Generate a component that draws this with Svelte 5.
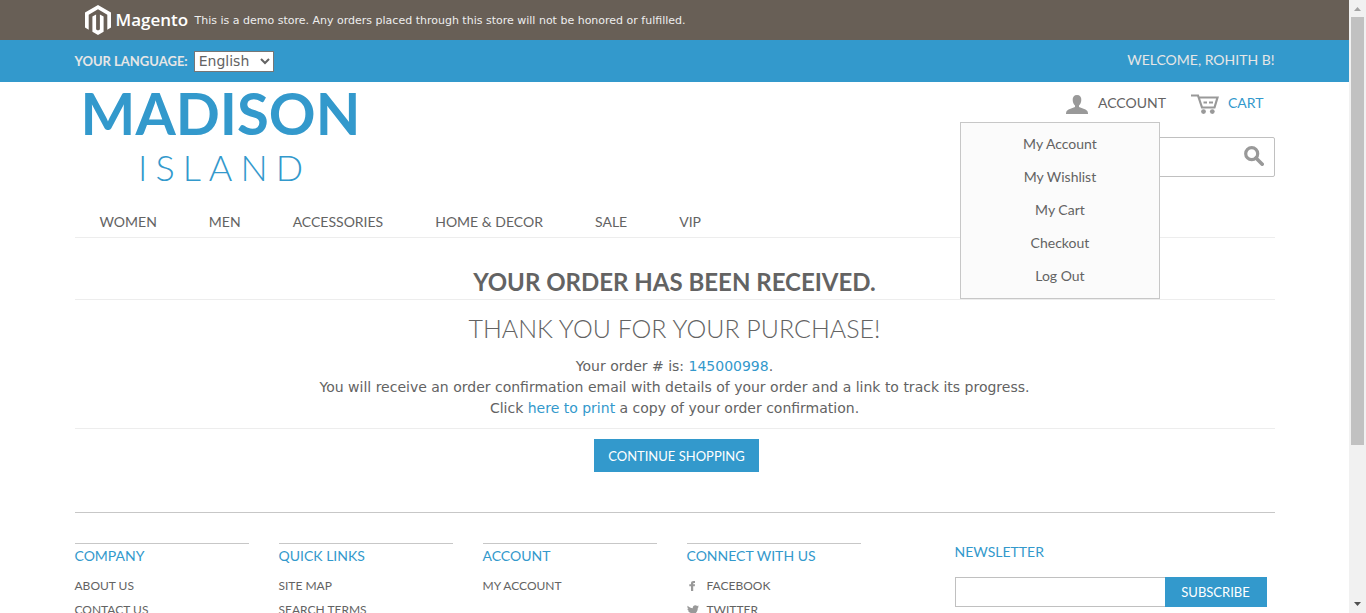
<script>
  const nav = ['Women', 'Men', 'Accessories', 'Home & Decor', 'Sale', 'VIP'];
  const accountMenu = ['My Account', 'My Wishlist', 'My Cart', 'Checkout', 'Log Out'];
  const columns = [
    { title: 'Company', links: ['About Us', 'Contact Us'] },
    { title: 'Quick Links', links: ['Site Map', 'Search Terms'] },
    { title: 'Account', links: ['My Account'] }
  ];
  let language = $state('English');
  let query = $state('');
  let email = $state('');
</script>

<div class="window">
  <div class="page">
    <div class="demo">
      <div class="wrap demo-row">
        <span class="brand">
          <svg width="26" height="30" viewBox="0 0 26 30" aria-hidden="true">
            <path fill="#fff" d="M13 0 26 7.500V22.500L22.300 24.700V9.700L13 4.300 3.700 9.700V24.700L0 22.500V7.500Z" />
            <path fill="#fff" d="M7.400 11.600 11.100 9.500V24.500L13 25.600 14.900 24.500V9.500L18.600 11.600V26.800L13 30 7.400 26.800Z" />
          </svg>
          <b>Magento</b>
        </span>
        <p>This is a demo store. Any orders placed through this store will not be honored or fulfilled.</p>
      </div>
    </div>

    <div class="lang">
      <div class="wrap lang-row">
        <label for="language">Your Language:</label>
        <select id="language" bind:value={language}>
          <option>English</option>
          <option>French</option>
          <option>German</option>
        </select>
        <p>Welcome, Rohith B!</p>
      </div>
    </div>

    <div class="wrap">
      <header>
        <a class="logo" href="#home"><strong>MADISON</strong><span>ISLAND</span></a>
        <div class="tools">
          <div class="actions">
            <div class="account">
              <a href="#account">
                <svg width="22" height="19" viewBox="0 0 22 19" aria-hidden="true">
                  <path fill="#999" d="M11 0C8 0 6.500 2 6.700 5C6.800 7.400 7.700 9.300 9 10.400V12L2.500 14.400Q0 15.400 0 18V19H22V18Q22 15.400 19.500 14.400L13 12V10.400C14.300 9.300 15.200 7.400 15.300 5C15.500 2 14 0 11 0Z" />
                </svg>
                <span>Account</span>
              </a>
              <ul class="menu">
                {#each accountMenu as item}
                  <li><a href="#account">{item}</a></li>
                {/each}
              </ul>
            </div>
            <a class="cart" href="#cart">
              <svg width="28" height="20" viewBox="0 0 28 20" aria-hidden="true">
                <path d="M0 1.500H7L11 13.500H23.500L26.500 3.500H8" fill="none" stroke="#999" stroke-width="2.200" />
                <path d="M12.500 8.500H16M18 8.500H22" stroke="#999" stroke-width="2" />
                <circle cx="12.500" cy="17.600" r="2.400" fill="#999" />
                <circle cx="21.300" cy="17.600" r="2.400" fill="#999" />
              </svg>
              <span>Cart</span>
            </a>
          </div>
          <form class="search" onsubmit={(e) => e.preventDefault()}>
            <input type="search" aria-label="Search" bind:value={query} />
            <button aria-label="Search">
              <svg width="20" height="20" viewBox="0 0 20 20" aria-hidden="true">
                <circle cx="7.700" cy="7.700" r="6" fill="none" stroke="#999" stroke-width="3.200" />
                <path d="M12 12 18.200 18.200" stroke="#999" stroke-width="3.600" stroke-linecap="round" />
              </svg>
            </button>
          </form>
        </div>
      </header>

      <nav>
        {#each nav as item}
          <a href="#shop">{item}</a>
        {/each}
      </nav>

      <main>
        <h1>Your order has been received.</h1>
        <h2>Thank you for your purchase!</h2>
        <p>Your order # is: <a href="#order">145000998</a>.</p>
        <p>You will receive an order confirmation email with details of your order and a link to track its progress.</p>
        <p>Click <a href="#print">here to print</a> a copy of your order confirmation.</p>
        <div class="buttons"><button class="primary">Continue Shopping</button></div>
      </main>

      <footer>
        {#each columns as column}
          <section>
            <h3>{column.title}</h3>
            <ul>
              {#each column.links as link}
                <li><a href="#info">{link}</a></li>
              {/each}
            </ul>
          </section>
        {/each}
        <section>
          <h3>Connect With Us</h3>
          <ul>
            <li>
              <a class="social" href="#facebook">
                <svg width="12" height="12" viewBox="0 0 12 12" aria-hidden="true">
                  <path fill="#999" d="M4 11V6.300H2.300V4.300H4V3.400C4 1.800 5 1 6.500 1H8V2.900H7C6.400 2.900 6.200 3.200 6.200 3.600V4.300H8L7.800 6.300H6.200V11Z" />
                </svg>
                Facebook
              </a>
            </li>
            <li>
              <a class="social" href="#twitter">
                <svg width="12" height="12" viewBox="0 0 12 12" aria-hidden="true">
                  <path fill="#999" d="M12 2.600 10.800 3.900C10.900 8 7.800 11 4 11 2.500 11 1.100 10.600 0 9.800 1.300 9.900 2.600 9.600 3.600 8.800 2.500 8.700 1.700 8.100 1.300 7.100H2.300C1.200 6.800 .4 5.900 .4 4.700L1.500 5C.4 4.200 .1 2.900 .7 1.800 2 3.300 3.900 4.200 5.800 4.300 5.500 2.500 6.700 1.200 8.300 1.200 9 1.200 9.700 1.500 10.100 2L11.700 1.400 10.700 2.800Z" />
                </svg>
                Twitter
              </a>
            </li>
          </ul>
        </section>
        <form class="newsletter" onsubmit={(e) => e.preventDefault()}>
          <label for="email">Newsletter</label>
          <div class="field">
            <input id="email" type="email" bind:value={email} />
            <button class="primary">Subscribe</button>
          </div>
        </form>
      </footer>
    </div>
  </div>

  <div class="scrollbar" aria-hidden="true">
    <svg width="7" height="4" viewBox="0 0 7 4"><path fill="#a3a3a3" d="M0 4 3.500 0 7 4Z" /></svg>
    <div class="track"><div class="thumb"></div></div>
    <svg width="7" height="4" viewBox="0 0 7 4"><path fill="#505050" d="M0 0H7L3.500 4Z" /></svg>
  </div>
</div>

<style>
  .window {
    display: flex;
    height: 100vh;
    overflow: hidden;
    background: #fff;
    color: #636363;
    font: 14px/21px Lato, sans-serif;
  }
  .page { flex: 1; min-width: 0; overflow: hidden; }
  .wrap { max-width: 1200px; margin: 0 auto; }
  a { color: inherit; text-decoration: none; }
  p, h1, h2, h3, ul { margin: 0; padding: 0; font-weight: 400; }
  ul { list-style: none; }
  button { border: 0; cursor: pointer; font-family: inherit; }
  input, select { box-sizing: border-box; margin: 0; outline: 0; }

  .demo { background: #685f56; color: #eee; }
  .demo-row { display: flex; align-items: center; height: 40px; font: 11px/20px Verdana, "DejaVu Sans", sans-serif; }
  .demo-row p { padding-top: 2px; }
  .brand { display: flex; align-items: center; gap: 5px; width: 110px; margin-left: 10px; color: #fff; }
  .brand b { font: 600 17px/24px "Open Sans", sans-serif; }

  .lang { background: #3399cc; color: #e6e6e6; text-transform: uppercase; }
  .lang-row { display: flex; align-items: center; gap: 6px; height: 42px; }
  .lang label { font-size: 13px; font-weight: 700; }
  .lang select {
    height: 21px;
    width: 80px;
    padding: 0;
    border: 1px solid #767676;
    background: #fff;
    color: #636363;
    font: 14px/18px Verdana, "DejaVu Sans", sans-serif;
  }
  .lang p { margin-left: auto; padding-bottom: 4px; }

  header { display: flex; justify-content: space-between; height: 123px; }
  .logo { display: flex; flex-direction: column; align-items: center; width: 292px; color: #3399cc; }
  .logo strong { font: 700 58px/62px Lato, sans-serif; }
  .logo span { padding-left: 8px; font: 300 36px/46px Lato, sans-serif; letter-spacing: 8px; }
  .tools { display: flex; flex-direction: column; align-items: flex-end; }
  .actions { display: flex; gap: 25px; padding-right: 11px; height: 55px; text-transform: uppercase; }
  .account { position: relative; }
  .account > a, .cart { display: flex; align-items: center; gap: 10px; height: 40px; }
  .cart { gap: 9px; color: #3399cc; }
  .account svg, .cart svg { margin-top: 4px; }
  .menu {
    position: absolute;
    top: 40px;
    right: 6px;
    z-index: 1;
    width: 198px;
    padding: 4px 0 6px;
    border: 1px solid #c7c7c7;
    background: #fbfbfb;
    text-align: center;
    text-transform: none;
  }
  .menu a { display: block; line-height: 33px; }
  .search { display: flex; box-sizing: border-box; width: 300px; height: 40px; border: 1px solid #c0c0c0; border-radius: 2px; }
  .search input { flex: 1; min-width: 0; border: 0; background: transparent; }
  .search button { display: flex; align-items: center; padding: 0 10px 2px; background: transparent; }

  nav { display: flex; gap: 52px; padding: 6px 25px 5px; border-bottom: 1px solid #ededed; text-transform: uppercase; }

  main { text-align: center; }
  h1 { padding: 29px 0 2px; border-bottom: 1px solid #ededed; font-size: 24px; line-height: 30px; font-weight: 700; text-transform: uppercase; }
  h2 { padding: 13px 0; font-size: 25px; line-height: 30px; font-weight: 300; text-transform: uppercase; }
  main p { font-family: Verdana, "DejaVu Sans", sans-serif; line-height: 21px; }
  main p a { color: #3399cc; }
  .buttons { margin-top: 9px; padding: 10px 0 40px 4px; border-top: 1px solid #ededed; }
  .primary { display: inline-block; height: 33px; padding: 0 14px; background: #3399cc; color: #fff; font-size: 13px; text-transform: uppercase; vertical-align: top; }

  footer { display: flex; gap: 30px; padding-top: 30px; border-top: 1px solid #c7c7c7; text-transform: uppercase; }
  section { width: 174px; border-top: 1px solid #c7c7c7; }
  h3, .newsletter label { color: #3399cc; font-size: 14px; line-height: 24px; }
  section ul { padding-top: 6px; font-size: 12px; line-height: 24px; }
  .social { display: flex; align-items: center; gap: 8px; }
  .newsletter { width: 312px; margin-left: auto; margin-right: 8px; }
  .newsletter label { display: block; line-height: 18px; }
  .field { display: flex; margin-top: 16px; }
  .field input { flex: 1; min-width: 0; height: 30px; border: 1px solid #c0c0c0; border-right: 0; }
  .field .primary { min-width: 102px; height: 30px; }

  .scrollbar { display: flex; flex-direction: column; align-items: center; gap: 6px; box-sizing: border-box; width: 17px; padding: 7px 0; background: #f1f1f1; }
  .track { flex: 1; width: 13px; }
  .thumb { height: 74%; background: #c1c1c1; }
</style>
